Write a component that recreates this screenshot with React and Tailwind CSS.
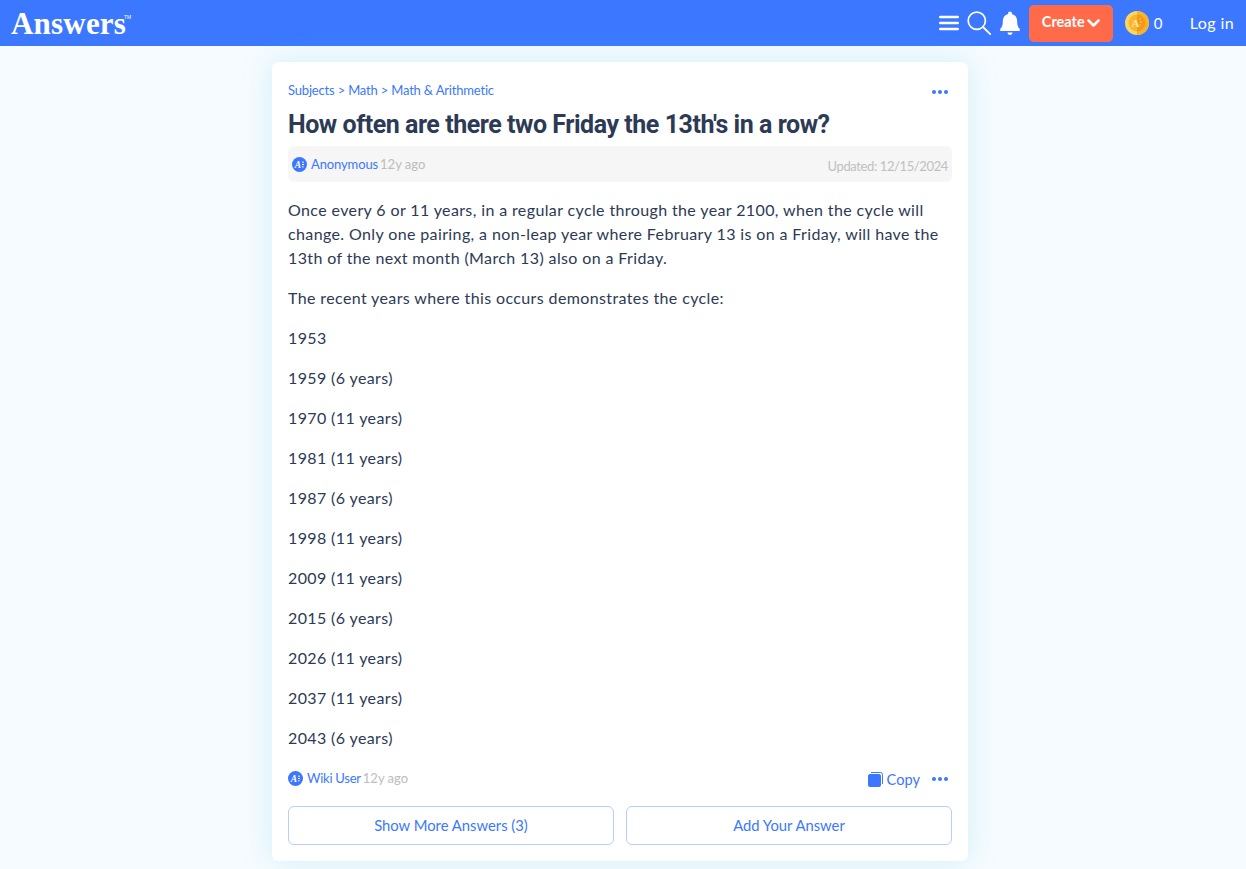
import React from "react";

const body = { fontFamily: '"Lato","Noto Sans",sans-serif' };

function LogoDot({ size = 15 }) {
  return (
    <svg width={size} height={size} viewBox="0 0 15 15" className="shrink-0">
      <circle cx="7.5" cy="7.5" r="7.5" fill="#3b78ff" />
      <text x="6" y="11" textAnchor="middle" fontSize="9.5" fontWeight="700" fontStyle="italic" fontFamily="Liberation Serif, serif" fill="#fff">A</text>
      <path d="M10 5.2h2M10 7.5h2M10 9.8h1.6" stroke="#fff" strokeWidth="1" />
    </svg>
  );
}

function Dots({ className = "" }) {
  return (
    <svg width="16" height="4" viewBox="0 0 16 4" className={className}>
      <circle cx="2" cy="2" r="2" fill="#3b78ff" />
      <circle cx="8" cy="2" r="2" fill="#3b78ff" />
      <circle cx="14" cy="2" r="2" fill="#3b78ff" />
    </svg>
  );
}

function Header() {
  return (
    <header className="h-[46px] bg-[#3b78ff] flex items-center justify-between pl-[11px] pr-[12px] text-white">
      <div className="flex items-start">
        <span className="text-[31px] leading-none font-bold tracking-[0.2px]" style={{ fontFamily: '"Liberation Serif",serif' }}>Answers</span>
        <span className="text-[5px] leading-none mt-[7px] -ml-[2px]" style={{ fontFamily: '"Liberation Sans",sans-serif' }}>TM</span>
      </div>
      <div className="flex items-center">
        <svg width="20" height="16" viewBox="0 0 20 16" className="mr-[8px]">
          <path d="M1.2 2h17.6M1.2 8h17.6M1.2 14h17.6" stroke="#fff" strokeWidth="2.4" strokeLinecap="round" />
        </svg>
        <svg width="24" height="24" viewBox="0 0 24 24" className="mr-[9px]">
          <circle cx="9.8" cy="9.8" r="8.6" fill="none" stroke="#fff" strokeWidth="1.7" />
          <path d="M16 16l7.2 7.2" stroke="#fff" strokeWidth="1.8" strokeLinecap="round" />
        </svg>
        <svg width="20" height="25" viewBox="0 0 20 25" className="mr-[9px]">
          <path d="M10 0.5c1.1 0 1.9.8 1.9 1.8v.7c3.4.9 5.3 3.7 5.3 7.2 0 4.3 1 6 2.2 7.2.5.5.6 1 .6 1.3 0 .7-.6 1.3-1.3 1.3H1.3C.6 20 0 19.400 0 18.700c0-.3.1-.8.6-1.300 1.200-1.200 2.200-2.900 2.200-7.200 0-3.500 1.900-6.300 5.300-7.200v-.7c0-1 .8-1.800 1.900-1.800z" fill="#fff" />
          <path d="M7.500 21.500h5c0 1.400-1.100 2.500-2.500 2.500s-2.500-1.100-2.500-2.500z" fill="#fff" />
        </svg>
        <button className="w-[84px] h-[37px] rounded-[5px] bg-[#ff6b4a] flex items-center justify-center gap-[2px] font-bold text-[14.5px] mr-[12px] pb-[2px]" style={body}>
          Create
          <svg width="13" height="9" viewBox="0 0 13 9" className="mt-[2px]"><path d="M1.500 1.500l5 5 5-5" fill="none" stroke="#fff" strokeWidth="2.500" strokeLinecap="round" strokeLinejoin="round" /></svg>
        </button>
        <svg width="24" height="24" viewBox="0 0 24 24" className="mr-[5px]">
          <circle cx="12" cy="12" r="12" fill="#fdd65c" />
          <path d="M12 0a12 12 0 0 1 0 24z" fill="#f7b32b" />
          <circle cx="12" cy="12" r="8.500" fill="#fbb62e" />
          <path d="M12 3.500a8.500 8.500 0 0 1 0 17z" fill="#f39a1a" />
          <text x="10.500" y="16" textAnchor="middle" fontSize="11" fontWeight="700" fontFamily="Liberation Serif, serif" fill="#fde9a8">A</text>
          <path d="M14.500 8.500l1.500-1M15 11h2M14.500 13.500l1.500 1" stroke="#fde08a" strokeWidth="0.8" />
        </svg>
        <span className="text-[15px] w-[36px]" style={body}>0</span>
        <span className="text-[16px] tracking-[0.4px]" style={body}>Log in</span>
      </div>
    </header>
  );
}

const years = ["1953", "1959 (6 years)", "1970 (11 years)", "1981 (11 years)", "1987 (6 years)", "1998 (11 years)", "2009 (11 years)", "2015 (6 years)", "2026 (11 years)", "2037 (11 years)", "2043 (6 years)"];

export default function App() {
  return (
    <div className="min-h-[869px] bg-[#f6fbff]" style={body}>
      <Header />
      <main className="flex justify-center pt-4 pb-2 pr-[6px]">
        <article className="w-[696px] bg-white rounded-[6px] p-4 pt-[18px] shadow-[0_0_28px_rgba(110,215,225,0.28)]">
          <div className="flex justify-between items-center h-5">
            <div className="text-[13px] tracking-[-0.18px] text-[#3b78ff] mt-[2px]">Subjects &gt; Math &gt; Math &amp; Arithmetic</div>
            <Dots className="mr-[4px] mt-1" />
          </div>
          <h1 className="text-[25px] leading-[32px] font-bold text-[#2c3a55] mt-[8px] pt-[1px] -mb-[1px] tracking-[-0.46px]" style={{ fontFamily: '"Roboto","Noto Sans",sans-serif' }}>
            How often are there two Friday the 13th's in a row?
          </h1>
          <div className="mt-[6px] h-9 rounded-[6px] bg-[#f6f6f6] flex justify-between pl-1 pr-1 text-[13px]">
            <div className="flex items-center gap-[4px] pt-[1px]">
              <LogoDot />
              <span className="text-[#3b78ff] tracking-[-0.12px]">Anonymous</span>
              <span className="text-[#bcbcbc] -ml-[2px]">12y ago</span>
            </div>
            <div className="text-[#c0c0c0] self-center mt-[6px] tracking-[-0.38px]">Updated: 12/15/2024</div>
          </div>
          <div className="mt-4 text-[16px] tracking-[0.38px] leading-6 text-[#2c3a55] flex flex-col gap-4">
            <p>Once every 6 or 11 years, in a regular cycle through the year 2100, when the cycle will change. Only one pairing, a non-leap year where February 13 is on a Friday, will have the 13th of the next month (March 13) also on a Friday.</p>
            <p>The recent years where this occurs demonstrates the cycle:</p>
            {years.map((y) => (
              <p key={y}>{y}</p>
            ))}
          </div>
          <div className="flex justify-between items-center mt-[18px] h-5">
            <div className="flex items-center gap-[4px] text-[13px] mt-[1px]">
              <LogoDot />
              <span className="text-[#3b78ff] tracking-[-0.25px]">Wiki User</span>
              <span className="text-[#bcbcbc] -ml-[2px]">12y ago</span>
            </div>
            <div className="flex items-center text-[#3b78ff] text-[14.6px] mt-[2px]">
              <svg width="15" height="15" viewBox="0 0 15 15" className="mr-[4px]">
                <path d="M3 .5h9.500a2 2 0 0 1 2 2V12" fill="none" stroke="#3b78ff" strokeWidth="1" />
                <rect x="0" y="2" width="13" height="13" rx="2" fill="#3b78ff" />
              </svg>
              <span className="pt-[2px]">Copy</span>
              <Dots className="ml-[12px] mr-[4px]" />
            </div>
          </div>
          <div className="grid grid-cols-2 gap-3 mt-[18px]">
            <button className="h-[39px] rounded-[6px] border border-[#b5cdff] text-[#3b78ff] text-[14.8px]">Show More Answers (3)</button>
            <button className="h-[39px] rounded-[6px] border border-[#b5cdff] text-[#3b78ff] text-[14.8px]">Add Your Answer</button>
          </div>
        </article>
      </main>
    </div>
  );
}
